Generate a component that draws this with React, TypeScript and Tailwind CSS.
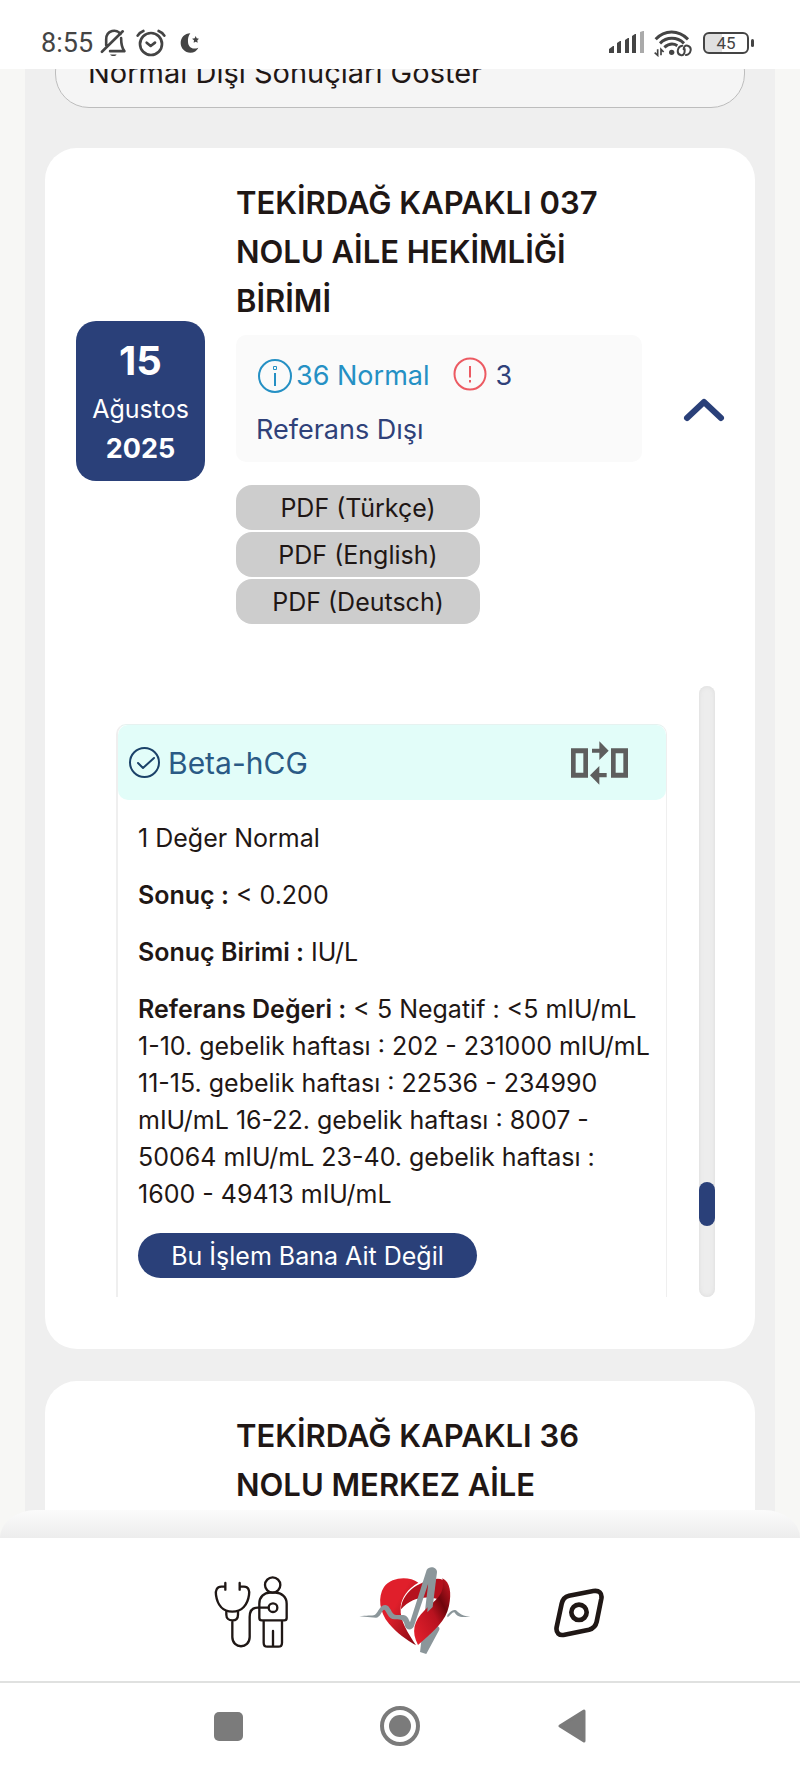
import { useState } from "react";

const pdfLanguages = ["Türkçe", "English", "Deutsch"];

export default function App() {
  return (
    <div className="flex h-screen flex-col overflow-hidden bg-white font-['Inter','Open_Sans',sans-serif] text-[#1f1715]">
      <StatusBar />
      <main className="min-h-0 flex-1 overflow-hidden bg-[#f7f7f5] px-[25px]">
        <div className="-mt-8 flex min-h-full flex-col bg-[#efefef] px-5">
          <div className="px-[10px]">
            <button className="h-[71px] w-full rounded-[34px] border border-[#bdbdbd] bg-[#f5f5f5] px-8 text-left text-[29px] leading-[60px]">
              Normal Dışı Sonuçları Göster
            </button>
          </div>
          <div className="mt-10 flex flex-col gap-8">
            <ResultCard />
            <section className="rounded-[32px] bg-white px-[30px] pt-[30px] pb-20">
              <h2 className="ml-[161px] text-[31px] leading-[49px] font-semibold">
                TEKİRDAĞ KAPAKLI 36
                <br />
                NOLU MERKEZ AİLE
              </h2>
            </section>
          </div>
        </div>
      </main>
      <TabBar />
      <SystemBar />
    </div>
  );
}

const ResultCard = () => {
  const [open, setOpen] = useState(true);

  return (
    <section className="rounded-[32px] bg-white pt-[30px] pr-[29px] pb-[52px] pl-[31px]">
      <div className="flex items-center">
        <div className="flex w-[129px] shrink-0 flex-col items-center rounded-[20px] bg-[#2a4079] pt-4 pb-3 text-white">
          <span className="text-[40px] leading-[48px] font-bold">15</span>
          <span className="mt-1 text-[25px] leading-[40px]">Ağustos</span>
          <span className="text-[27px] leading-[40px] font-bold">2025</span>
        </div>
        <div className="ml-[31px] min-w-0 flex-1">
          <h2 className="text-[31px] leading-[49px] font-semibold">
            TEKİRDAĞ KAPAKLI 037
            <br />
            NOLU AİLE HEKİMLİĞİ
            <br />
            BİRİMİ
          </h2>
          <div className="mt-[10px] rounded-[10px] bg-[#fafafa] px-5 pt-[14px] pb-[5px] text-[27px] leading-[54px] text-[#2f4179]">
            <div className="flex items-center">
              <InfoIcon />
              <span className="ml-1 text-[#2590c4]">36 Normal</span>
              <AlertIcon />
              <span className="ml-2">3</span>
            </div>
            <div>Referans Dışı</div>
          </div>
          <div className="mt-[23px] flex w-[244px] flex-col gap-[2px]">
            {pdfLanguages.map((lang) => (
              <button key={lang} className="h-[45px] rounded-[16px] bg-[#cdcdcd] text-[25px] leading-[44px]">
                PDF ({lang})
              </button>
            ))}
          </div>
        </div>
        <button onClick={() => setOpen(!open)} aria-label="Aç / Kapat" className="ml-10 p-px pt-[18px]">
          <svg width="42" height="24" viewBox="0 0 42 24" fill="none" stroke="#2a4079" strokeWidth="6" strokeLinecap="round" strokeLinejoin="round">
            <path d={open ? "M4 20 21 4l17 16" : "M4 4l17 16L38 4"} />
          </svg>
        </button>
      </div>
      {open && (
        <div className="mt-[62px] flex h-[611px] justify-between pr-[11px] pl-10">
          <div className="min-w-0 flex-1 overflow-hidden pt-[38px]">
            <TestResult />
          </div>
          <div className="ml-8 w-4 shrink-0 rounded-full bg-[#ededed] pt-[496px] shadow-[inset_0_0_5px_#dcdcdc]">
            <div className="h-[44px] rounded-full bg-[#2a4079]" />
          </div>
        </div>
      )}
    </section>
  );
};

const TestResult = () => (
  <article className="h-[700px] rounded-t-[10px] border-2 border-t border-r border-[#efefef] border-t-[#e6f2f0]">
    <header className="flex h-[75px] items-center rounded-[10px] bg-[#e2fdf9] pr-[38px] pl-[11px]">
      <svg width="31" height="31" viewBox="0 0 31 31" fill="none" stroke="#1b4269" strokeWidth="2" strokeLinecap="round" strokeLinejoin="round">
        <circle cx="15.5" cy="15.5" r="14.5" />
        <path d="m9 16 5 5 11-10" />
      </svg>
      <h3 className="ml-2 flex-1 text-[30px] leading-[40px] text-[#2a5a85]">Beta-hCG</h3>
      <button aria-label="Karşılaştır">
        <svg width="58" height="44" viewBox="270 211 174 132" fill="#5e5e5e">
          <path fillRule="evenodd" d="M273 233h51v88h-51zM287 248v58h23v-58zM393 233h51v88h-51zM407 248v58h23v-58z" />
          <path d="M336 234h22v-22l28 28-28 28v-22h-22zM380 307h-22v-21l-28 28 28 28v-22h22z" />
        </svg>
      </button>
    </header>
    <div className="flex flex-col gap-5 px-5 pt-5 text-[25px] leading-[37px]">
      <p>1 Değer Normal</p>
      <p>
        <b className="font-semibold">Sonuç :</b> &lt; 0.200
      </p>
      <p>
        <b className="font-semibold">Sonuç Birimi :</b> IU/L
      </p>
      <p className="whitespace-nowrap">
        <b className="font-semibold">Referans Değeri :</b> &lt; 5 Negatif : &lt;5 mIU/mL
        <br />
        1-10. gebelik haftası : 202 - 231000 mIU/mL
        <br />
        11-15. gebelik haftası : 22536 - 234990
        <br />
        mIU/mL 16-22. gebelik haftası : 8007 -
        <br />
        50064 mIU/mL 23-40. gebelik haftası :
        <br />
        1600 - 49413 mIU/mL
      </p>
      <button className="h-[45px] w-[339px] rounded-full bg-[#2a4079] text-[25px] leading-[44px] text-white">
        Bu İşlem Bana Ait Değil
      </button>
    </div>
  </article>
);

const InfoIcon = () => (
  <svg className="ml-[2px] shrink-0" width="34" height="34" viewBox="0 0 34 34" fill="none" stroke="#2590c4" strokeWidth="2">
    <circle cx="17" cy="17" r="16" />
    <path strokeWidth="1" d="M15.5 7.500h3v3h-3z" />
    <path d="M17 14v13" />
  </svg>
);

const AlertIcon = () => (
  <svg className="mb-1 ml-6 shrink-0" width="34" height="34" viewBox="0 0 34 34" fill="none" stroke="#ec5a62" strokeWidth="2">
    <circle cx="17" cy="17" r="15.500" />
    <path d="M17 9v11.500M17 23v2.500" />
  </svg>
);

const StatusBar = () => (
  <div className="flex h-[69px] shrink-0 items-center justify-between bg-white pt-4 pr-[46px] pl-[41px] text-[#444]">
    <div className="flex items-center">
      <span className="font-['Roboto',sans-serif] text-[27px] leading-[32px]">8:55</span>
      {/* silent */}
      <svg className="ml-[7px]" width="26" height="28" viewBox="300 84 80 86" fill="none" stroke="#444" strokeWidth="8" strokeLinecap="round" strokeLinejoin="round">
        <path d="M319 134v-18c0-29 34-34 44-16M365 112c0 18 1 28 10 40h-44M306 154l64-63" />
        <path d="M331 162c4 7 17 7 20 0z" fill="#444" stroke="none" />
      </svg>
      {/* alarm */}
      <svg className="ml-[10px]" width="30" height="28" viewBox="410 84 90 84" fill="none" stroke="#444" strokeWidth="8" strokeLinecap="round" strokeLinejoin="round">
        <circle cx="455" cy="129" r="33" />
        <path d="m442 125 12 10 13-10" />
        <path d="M415 104c4-7 9-11 17-14M495 104c-4-7-9-11-17-14" />
      </svg>
      {/* night mode */}
      <svg className="ml-[14px]" width="20" height="20" viewBox="540 96 60 60" fill="#444">
        <path d="M571 97c-17 0-29 13-29 29s13 29 29 29c11 0 20-6 24-15-18 7-30-1-31-17-1-11 2-20 7-26z" />
        <path d="m587 105 3 7 7 1-5 5 1 7-6-3-6 3 1-7-6-5 8-1z" />
      </svg>
    </div>
    <div className="flex items-center">
      <svg width="36" height="23" viewBox="0 0 36 23" fill="#444">
        <path d="M0 22v-4l4-3h1v7zM8 22V12l3-2h1v12zM16 22V9l3-2h1v15zM23 22V5l3-2h1v19z" />
        <path d="M31 22V1l3-1h1v22z" fill="#aaa" />
      </svg>
      <svg className="ml-[9px]" width="38" height="28" viewBox="762 86 114 84" fill="none" stroke="#444" strokeWidth="9">
        <path d="M767 117c27-29 68-29 97 0M780 129c20-20 51-20 72 0M793 141c14-12 28-12 39-5" />
        <circle cx="815" cy="156" r="8" fill="#444" stroke="none" />
        <path strokeWidth="5" d="M773 147v18l-9-8M783 165v-18l8 8" />
        <path strokeWidth="6" strokeLinecap="round" d="M847 136c-15 2-19 24-5 28 8 2 12-4 12-12v-6M858 164c15-2 20-24 5-28-8-2-12 4-12 11" />
      </svg>
      <div className="ml-[11px] flex h-[22px] w-[46px] items-center justify-center rounded-[6px] border-2 border-[#444] bg-linear-to-r from-[#e0e0e0] from-40% to-white to-40% font-['Roboto',sans-serif] text-[17px] leading-[20px]">
        45
      </div>
      <div className="ml-[2px] h-2 w-[3px] rounded-sm bg-[#444]" />
    </div>
  </div>
);

const TabBar = () => (
  <nav className="relative flex h-[143px] shrink-0 justify-center bg-white pt-1 pl-[30px]">
    <div className="absolute inset-x-0 -top-7 h-7 rounded-[36px_36px_0_0/28px_28px_0_0] bg-linear-to-b from-[#fbfbfb] to-[#ededed]" />
    <div className="grid w-[492px] grid-cols-3 place-items-center">
      <a href="#doktor" aria-label="Doktor">
        <svg width="74" height="74" viewBox="102 102 222 222" fill="none" stroke="#1f1715" strokeWidth="7" strokeLinecap="round" strokeLinejoin="round">
          <path d="M136 126v20M136 137h-12c-14 0-18 12-16 25 4 29 20 50 49 50s46-21 50-50c2-13-1-25-15-25h-13M179 126v20" />
          <path d="M139 212v9c0 11 8 17 18 17s17-6 17-17v-9M157 238v50c0 37 52 37 52 0v-60c0-18 8-28 24-28h32" />
          <circle cx="278" cy="132" r="23" />
          <circle cx="279" cy="200" r="13" />
          <path d="M245 238c-5 0-7-2-7-7v-43c0-20 14-33 32-33h16c18 0 34 13 34 33v43c0 5-2 7-7 7zM251 240v65c0 8 4 12 11 12h33c7 0 11-4 11-12v-65M279 270v44" />
        </svg>
      </a>
      <a href="#anasayfa" aria-label="Ana sayfa">
        <svg width="112" height="90" viewBox="540 80 336 270" fill="none">
          <defs>
            <linearGradient id="lobe" x1="0" y1="0" x2="1" y2="1">
              <stop offset="0.400" stopColor="#e01f2b" />
              <stop offset="1" stopColor="#7d0710" />
            </linearGradient>
            <linearGradient id="band" x1="0" y1="1" x2="1" y2="0">
              <stop offset="0" stopColor="#e9222e" />
              <stop offset="0.500" stopColor="#b8121f" />
              <stop offset="0.700" stopColor="#6f050c" />
              <stop offset="1" stopColor="#d01a26" />
            </linearGradient>
          </defs>
          <path fill="url(#lobe)" d="M718 127c-28-20-79-18-103 13-19 29-15 75 15 110 23 27 53 49 81 65-24-38-49-73-46-113 1-30 22-58 53-75z" />
          <path fill="#b5111d" d="M666 207c1-45 46-85 110-92 12 0 20 5 27 15l-25 47c-40-12-82-4-112 30z" />
          <path stroke="#8b969a" strokeWidth="20" strokeLinecap="round" d="M762 95 733 336l38-70" />
          <path fill="url(#band)" d="M790 114c24 11 28 45 20 82-10 47-40 70-93 118-21-40-13-72 20-104 30-30 63-45 53-96z" />
          <path fill="#8b969a" d="M541 228c22-4 37-1 47-5 11-9 15-29 31-29 16 1 17 28 32 30 14 1 29-4 36 9l6 13 50-157c8-14 31-9 31 6l-13 105-16 16 3-87-43 128c-5 14-23 14-27 0-4-19-9-20-31-20-21 0-24-27-32-29-6 2-12 24-24 24z" />
          <path fill="#8b969a" d="M805 224c9-9 13-16 23-15 9 1 13 19 46 20-35 4-40-2-48-13-6-2-12 10-21 15z" />
        </svg>
      </a>
      <a href="#konum" aria-label="Yakınımda">
        <svg width="52" height="52" viewBox="161 134 156 156" fill="none" stroke="#1f1715" strokeWidth="14">
          <path d="m209 163 73-14c17-3 27 6 24 23l-14 69c-3 14-9 20-23 24l-73 15c-17 4-27-6-24-23l15-70c3-14 9-21 22-24z" />
          <circle cx="239" cy="213" r="23" />
        </svg>
      </a>
    </div>
  </nav>
);

const SystemBar = () => (
  <div className="flex h-24 shrink-0 justify-center border-t-2 border-[#e0e1e0] bg-white pb-2">
    <div className="grid w-[516px] grid-cols-3 place-items-center">
      <button aria-label="Son uygulamalar" className="size-[29px] rounded-[5px] bg-[#7b7b7b]" />
      <button aria-label="Ana ekran" className="flex size-10 items-center justify-center rounded-full border-4 border-[#7b7b7b]">
        <span className="size-[22px] rounded-full bg-[#7b7b7b]" />
      </button>
      <button aria-label="Geri">
        <svg width="28" height="34" viewBox="0 0 28 34" fill="#7b7b7b" stroke="#7b7b7b" strokeWidth="3" strokeLinejoin="round">
          <path d="M2 17 26 2v30z" />
        </svg>
      </button>
    </div>
  </div>
);
